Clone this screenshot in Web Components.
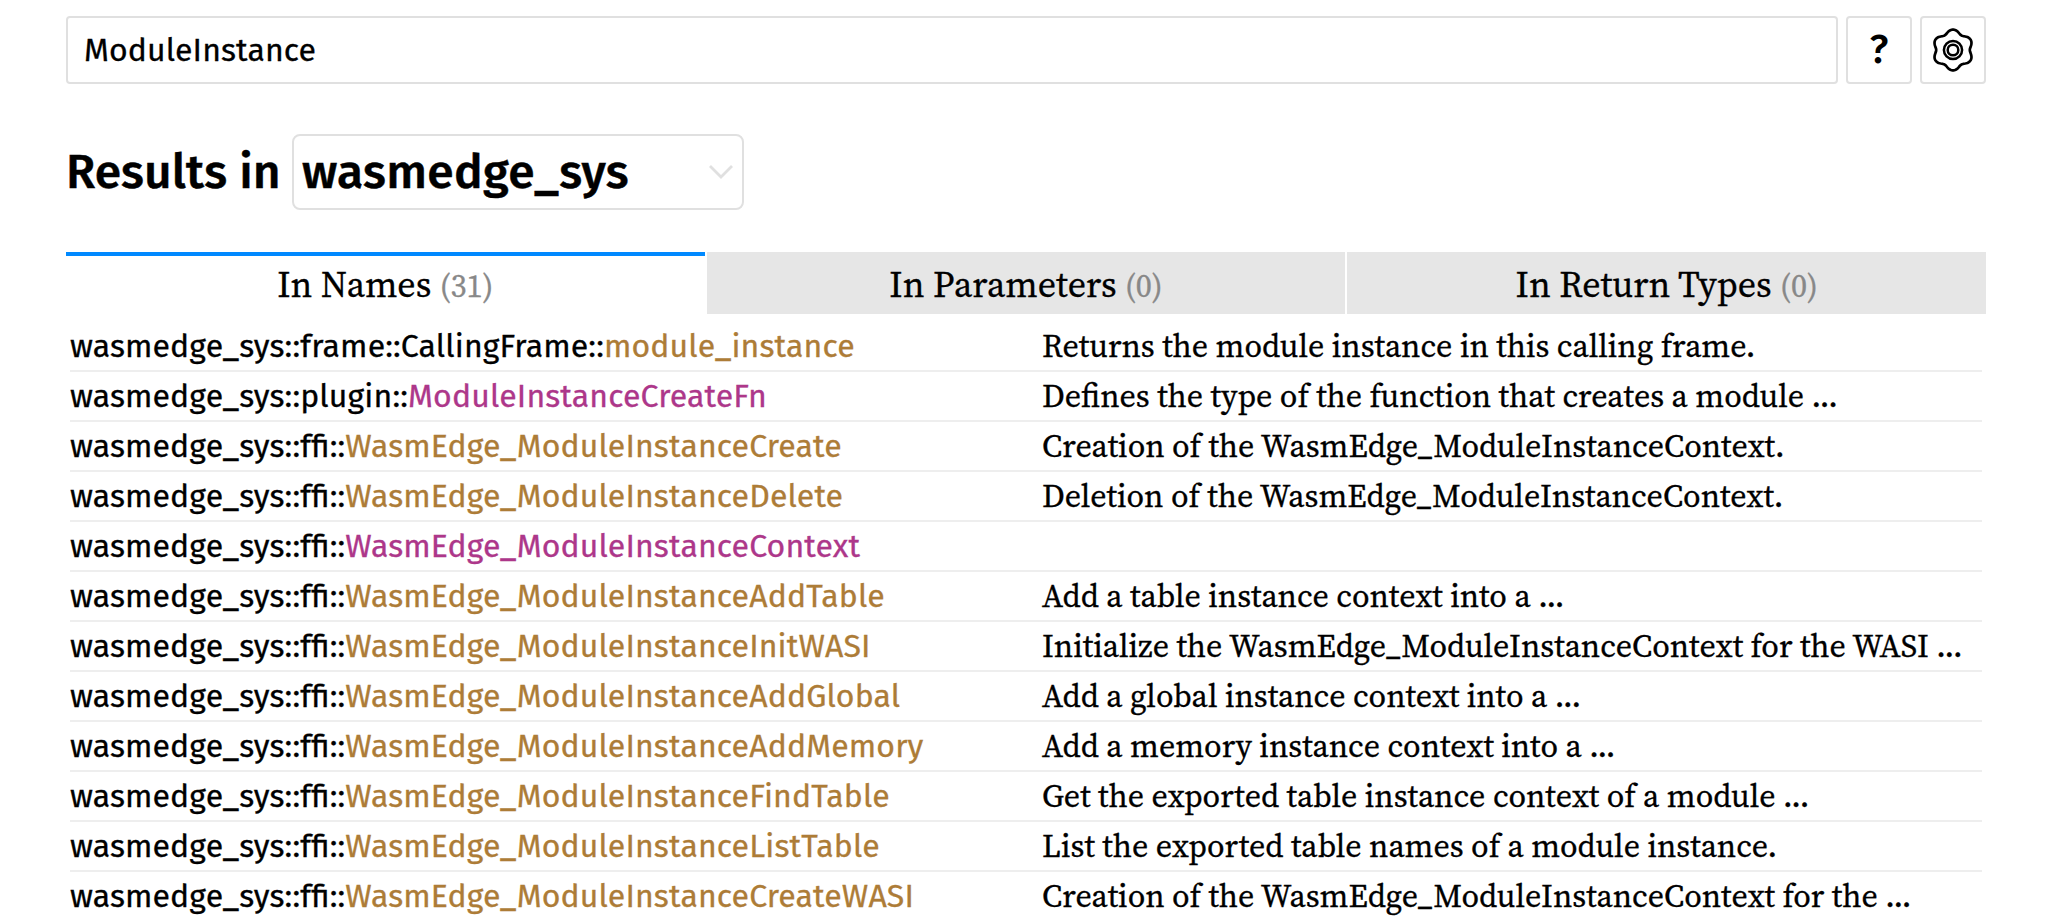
<!DOCTYPE html>
<html lang="en">
<head>
<meta charset="utf-8">
<title>Results for ModuleInstance</title>
<style>
html,body{margin:0;background:#fff;color:#000;overflow:hidden}
body{height:916px;-webkit-text-stroke:.3px}
</style>
</head>
<body>
<search-page></search-page>
<script>
const SANS = '"Fira Sans","Noto Sans",sans-serif';
const SERIF = '"Source Serif 4","Liberation Serif",serif';

class SearchBar extends HTMLElement {
  connectedCallback() {
    this.attachShadow({mode: 'open'}).innerHTML = `
<style>
:host{display:flex;gap:8px;height:68px;font:32px/64px ${SANS}}
div{box-sizing:border-box;border:2px solid #e0e0e0;border-radius:4px;height:68px}
.field{flex:1;padding-left:16px;letter-spacing:.1px}
.btn{width:66px;display:flex;align-items:center;justify-content:center}
.help{font-weight:500;font-size:40px;-webkit-text-stroke:0}
svg{display:block}
</style>
<div class="field"><span>ModuleInstance</span></div>
<div class="btn help"><span>?</span></div>
<div class="btn"><svg width="44" height="44" viewBox="-22 -22 44 44" fill="none" stroke="#000" stroke-width="2.7" stroke-linejoin="round">
<path id="gear"/><circle r="9.1" stroke-width="2.5"/><circle r="5.3" stroke-width="2.5"/></svg></div>`;
    const pts = [];
    for (let a = 0; a < 360; a += 3) {
      const t = a * Math.PI / 180;
      const r = 18.7 + 1.8 * Math.cos(6 * t) - .1 * Math.cos(12 * t);
      pts.push((r * Math.sin(t)).toFixed(2) + ' ' + (-r * Math.cos(t)).toFixed(2));
    }
    this.shadowRoot.querySelector('#gear').setAttribute('d', 'M' + pts.join('L') + 'Z');
  }
}

class ResultsHeading extends HTMLElement {
  connectedCallback() {
    this.attachShadow({mode: 'open'}).innerHTML = `
<style>
:host{display:flex;height:76px;margin-top:50px;font:500 48px/72px ${SANS};-webkit-text-stroke:.5px}
.label{width:226px;padding-top:2px;white-space:nowrap;letter-spacing:.08px}
.select{box-sizing:border-box;width:452px;height:76px;border:2px solid #e0e0e0;border-radius:8px;padding:0 9px 0 8px;display:flex;align-items:center;justify-content:space-between;letter-spacing:.33px}
</style>
<div class="label"><span>Results in</span></div>
<div class="select"><span>wasmedge_sys</span>
<svg width="24" height="14" viewBox="0 0 24 14" fill="none" stroke="#e0e0e0" stroke-width="2.8"><path d="M1 1L12 12L23 1"/></svg></div>`;
  }
}

class ResultTab extends HTMLElement {
  connectedCallback() {
    this.attachShadow({mode: 'open'}).innerHTML = `
<style>
:host{flex:1;box-sizing:border-box;height:62px;background:#e6e6e6;border-top:4px solid #e6e6e6;text-align:center;font:36px/58px ${SERIF}}
:host([selected]){background:#fff;border-top-color:#0089ff}
.n{color:#888;font-size:32px}
</style>
<span>${this.getAttribute('label')} <span class="n">(${this.getAttribute('count')})</span></span>`;
  }
}

class ResultRow extends HTMLElement {
  connectedCallback() {
    const g = k => this.getAttribute(k) || '';
    this.attachShadow({mode: 'open'}).innerHTML = `
<style>
:host{display:flex;box-sizing:border-box;height:50px;border-bottom:2px solid #eee}
.name{width:972px;font:32px/48px ${SANS};white-space:nowrap;letter-spacing:.13px;font-variant-ligatures:common-ligatures contextual;font-feature-settings:"liga","calt"}
.fn{color:#ad7c37}.type{color:#ad378a}
.desc{font:32px/48px ${SERIF};white-space:nowrap}
</style>
<div class="name">${g('path')}<span class="${g('kind')}">${g('name')}</span></div>
<div class="desc"><span>${g('desc')}</span></div>`;
  }
}

const W = 'wasmedge_sys::ffi::', M = 'WasmEdge_ModuleInstance';
const ROWS = [
  ['wasmedge_sys::frame::CallingFrame::', 'fn', 'module_instance', 'Returns the module instance in this calling frame.'],
  ['wasmedge_sys::plugin::', 'type', 'ModuleInstanceCreateFn', 'Defines the type of the function that creates a module ...'],
  [W, 'fn', M + 'Create', 'Creation of the WasmEdge_ModuleInstanceContext.'],
  [W, 'fn', M + 'Delete', 'Deletion of the WasmEdge_ModuleInstanceContext.'],
  [W, 'type', M + 'Context', ''],
  [W, 'fn', M + 'AddTable', 'Add a table instance context into a ...'],
  [W, 'fn', M + 'InitWASI', 'Initialize the WasmEdge_ModuleInstanceContext for the WASI ...'],
  [W, 'fn', M + 'AddGlobal', 'Add a global instance context into a ...'],
  [W, 'fn', M + 'AddMemory', 'Add a memory instance context into a ...'],
  [W, 'fn', M + 'FindTable', 'Get the exported table instance context of a module ...'],
  [W, 'fn', M + 'ListTable', 'List the exported table names of a module instance.'],
  [W, 'fn', M + 'CreateWASI', 'Creation of the WasmEdge_ModuleInstanceContext for the ...'],
];

class SearchPage extends HTMLElement {
  connectedCallback() {
    this.attachShadow({mode: 'open'}).innerHTML = `
<style>
:host{display:block;box-sizing:border-box;width:2068px;height:916px;padding:16px 82px 0 66px;overflow:hidden}
.tabs{display:flex;gap:2px;margin-top:42px}
.rows{padding:8px 4px 0}
</style>
<search-bar></search-bar>
<results-heading></results-heading>
<div class="tabs">
<result-tab selected label="In Names" count="31"></result-tab>
<result-tab label="In Parameters" count="0"></result-tab>
<result-tab label="In Return Types" count="0"></result-tab>
</div>
<div class="rows">${ROWS.map(([p, k, n, d]) =>
  `<result-row path="${p}" kind="${k}" name="${n}" desc="${d}"></result-row>`).join('')}</div>`;
  }
}

customElements.define('search-bar', SearchBar);
customElements.define('results-heading', ResultsHeading);
customElements.define('result-tab', ResultTab);
customElements.define('result-row', ResultRow);
customElements.define('search-page', SearchPage);
</script>
</body>
</html>
